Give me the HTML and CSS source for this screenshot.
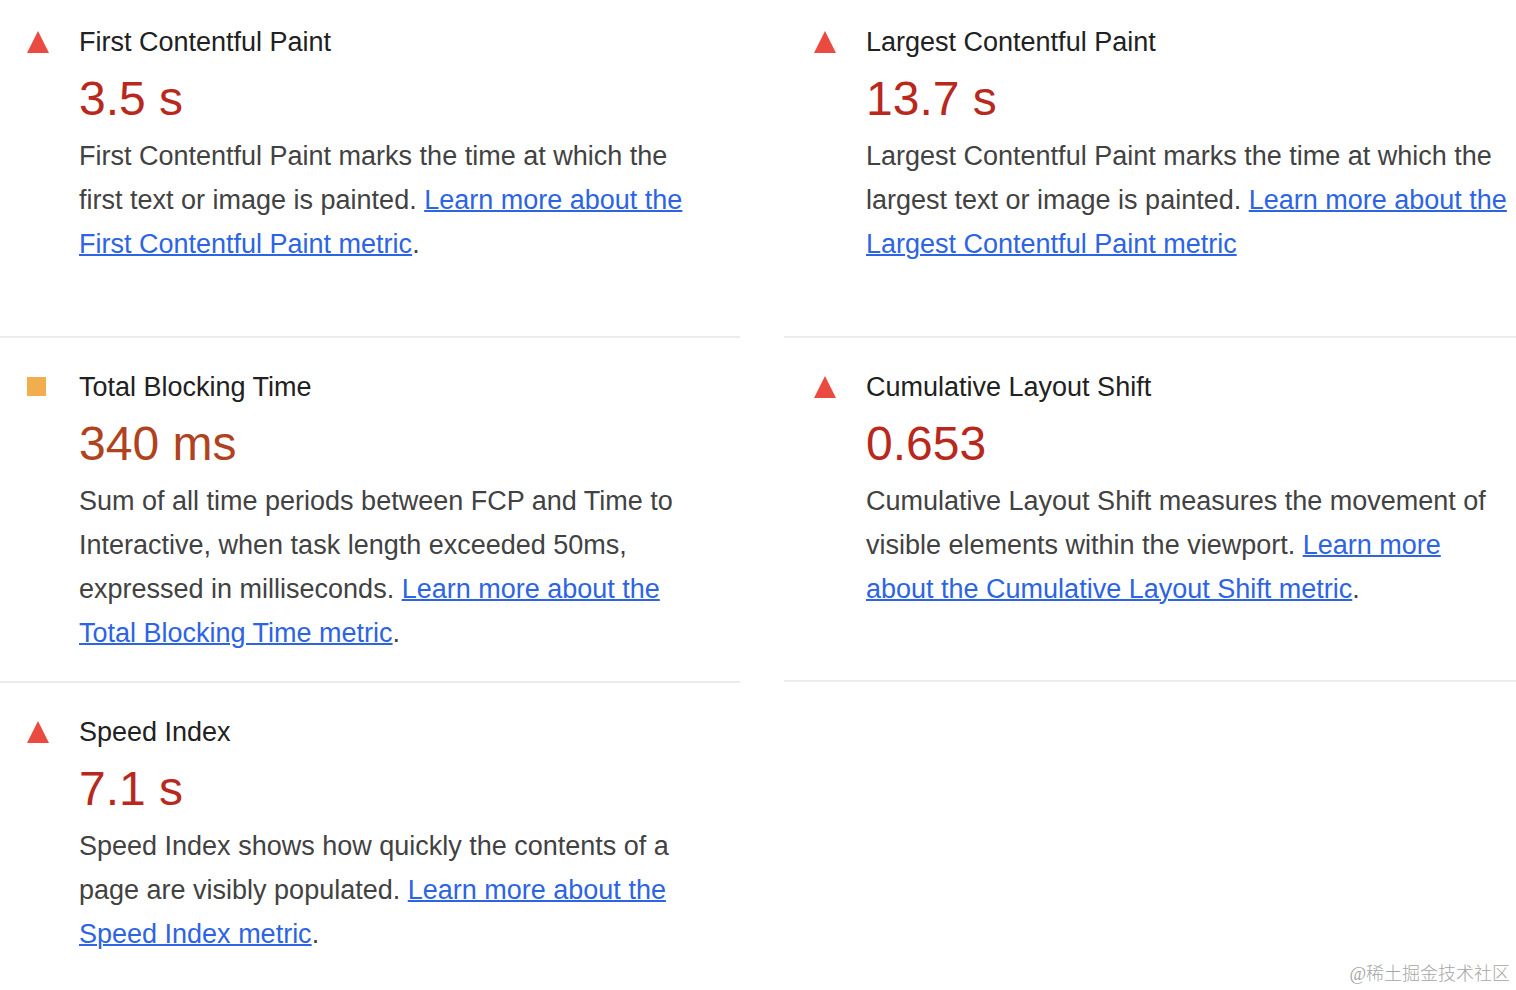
FILE: index.html
```html
<!DOCTYPE html>
<html lang="en">
  <head>
    <meta charset="UTF-8" />
    <meta name="viewport" content="width=device-width, initial-scale=1.0" />
    <title>Performance Metrics</title>
    <link rel="stylesheet" href="styles.css" />
  </head>
  <body>
    <main class="metrics">
      <div class="column left">
        <section class="metric fail">
          <svg class="icon" viewBox="0 0 22 22"><path d="M11 0 22 22H0z" /></svg>
          <div class="metric-body">
            <h2>First Contentful Paint</h2>
            <div class="value">3.5 s</div>
            <p>
              First Contentful Paint marks the time at which the first text or
              image is painted.
              <a href="#fcp">Learn more about the First Contentful Paint metric</a>.
            </p>
          </div>
        </section>

        <section class="metric average">
          <svg class="icon" viewBox="0 0 22 22"><path d="M0 1h19v19H0z" /></svg>
          <div class="metric-body">
            <h2>Total Blocking Time</h2>
            <div class="value">340 ms</div>
            <p>
              Sum of all time periods between FCP and Time to Interactive, when
              task length exceeded 50ms, expressed in milliseconds.
              <a href="#tbt">Learn more about the Total Blocking Time metric</a>.
            </p>
          </div>
        </section>

        <section class="metric fail">
          <svg class="icon" viewBox="0 0 22 22"><path d="M11 0 22 22H0z" /></svg>
          <div class="metric-body">
            <h2>Speed Index</h2>
            <div class="value">7.1 s</div>
            <p>
              Speed Index shows how quickly the contents of a page are visibly
              populated.
              <a href="#si">Learn more about the Speed Index metric</a>.
            </p>
          </div>
        </section>
      </div>

      <div class="column right">
        <section class="metric fail">
          <svg class="icon" viewBox="0 0 22 22"><path d="M11 0 22 22H0z" /></svg>
          <div class="metric-body">
            <h2>Largest Contentful Paint</h2>
            <div class="value">13.7 s</div>
            <p>
              Largest Contentful Paint marks the time at which the largest text
              or image is painted.
              <a href="#lcp">Learn more about the Largest Contentful Paint metric</a>
            </p>
          </div>
        </section>

        <section class="metric fail">
          <svg class="icon" viewBox="0 0 22 22"><path d="M11 0 22 22H0z" /></svg>
          <div class="metric-body">
            <h2>Cumulative Layout Shift</h2>
            <div class="value">0.653</div>
            <p>
              Cumulative Layout Shift measures the movement of visible elements
              within the viewport.
              <a href="#cls">Learn more about the Cumulative Layout Shift metric</a>.
            </p>
          </div>
        </section>
      </div>
    </main>
    <div class="watermark" lang="zh">@稀土掘金技术社区</div>
  </body>
</html>
```

FILE: styles.css
```css
body {
  margin: 0;
  background-color: #fff;
  color: #424242;
  font-family: "Liberation Sans", Arial, sans-serif;
  font-size: 27px;
  line-height: 44px;
}

.metrics {
  display: grid;
  grid-template-columns: 740fr 732fr;
  column-gap: 44px;
}

.metric {
  box-sizing: border-box;
  display: flex;
  align-items: flex-start;
  min-height: 344px;
  padding: 27px 40px 26px 27px;
  border-bottom: 2px solid #ebebeb;
}

.metric:first-child {
  min-height: 338px;
  padding-top: 20px;
}

.left .metric:last-child {
  min-height: 0;
  border-bottom: none;
}

.right .metric {
  padding-left: 30px;
  padding-right: 4px;
}

.icon {
  flex: none;
  width: 22px;
  height: 22px;
  margin: 11px 30px 0 0;
}

.fail .icon {
  fill: #eb4a41;
}

.average .icon {
  fill: #f2ad4e;
}

h2 {
  margin: 0;
  color: #212121;
  font-size: 27px;
  font-weight: normal;
}

.value {
  color: #b8281d;
  font-size: 48px;
  line-height: 70px;
}

.average .value {
  color: #b0431f;
}

p {
  margin: 0;
}

a {
  color: #2c64e3;
  text-decoration-thickness: 2px;
}

/* sits over the bottom right corner of the page */
.watermark {
  position: absolute;
  right: 6px;
  bottom: 3px;
  color: #a6a6a6;
  font-family: "Liberation Serif", "Noto Sans CJK SC", serif;
  font-size: 18px;
  font-weight: 300;
  line-height: 26px;
}
```
